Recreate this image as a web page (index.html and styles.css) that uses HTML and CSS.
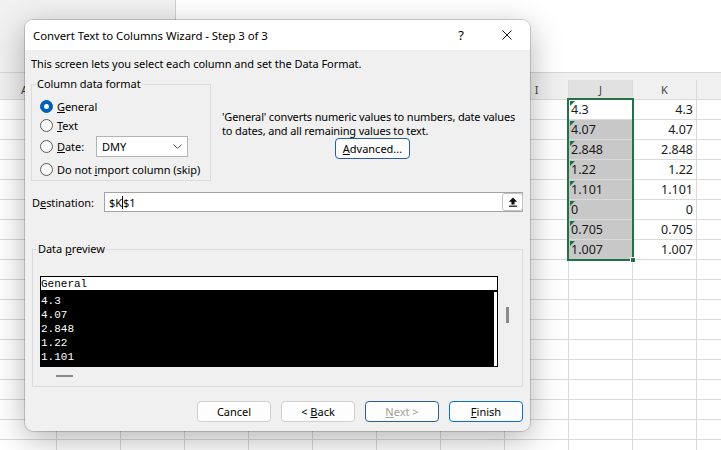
FILE: index.html
```html
<!doctype html>
<html lang="en">
  <head>
    <meta charset="UTF-8" />
    <meta name="viewport" content="width=device-width, initial-scale=1.0" />
    <title>Convert Text to Columns</title>
    <link rel="stylesheet" href="styles.css">
  </head>
  <body>
    <div class="sheet">
      <div class="topbar">
        <div class="namebox"></div>
        <div class="formula"></div>
      </div>
      <div class="grid-area">
        <!-- B to H sit under the dialog, so they are left blank -->
        <div class="colheads">
          <div class="ch">A</div>
          <div class="ch"></div>
          <div class="ch"></div>
          <div class="ch"></div>
          <div class="ch"></div>
          <div class="ch"></div>
          <div class="ch"></div>
          <div class="ch"></div>
          <div class="ch">I</div>
          <div class="ch cur">J</div>
          <div class="ch">K</div>
          <div class="ch"></div>
        </div>
        <div class="cells">
          <div class="c j">4.3</div><div class="c k">4.3</div>
          <div class="c j hl">4.07</div><div class="c k">4.07</div>
          <div class="c j hl">2.848</div><div class="c k">2.848</div>
          <div class="c j hl">1.22</div><div class="c k">1.22</div>
          <div class="c j hl">1.101</div><div class="c k">1.101</div>
          <div class="c j hl">0</div><div class="c k">0</div>
          <div class="c j hl">0.705</div><div class="c k">0.705</div>
          <div class="c j hl">1.007</div><div class="c k">1.007</div>
          <div class="selection"><span class="handle"></span></div>
        </div>
      </div>
    </div>

    <div class="dialog">
      <div class="titlebar">
        <span class="title">Convert Text to Columns Wizard - Step 3 of 3</span>
        <span class="tb-btn help">?</span>
        <span class="tb-btn close">
          <svg width="10" height="10" viewBox="0 0 10 10"><path d="M0.5 0.5 L9.5 9.5 M9.5 0.5 L0.5 9.5" stroke="#1a1a1a" stroke-width="1" fill="none"/></svg>
        </span>
      </div>

      <div class="dlg-body">
        <p class="intro">This screen lets you select each column and set the Data Format.</p>

        <div class="format-row">
          <div class="group format-group">
            <span class="group-title">Column data format</span>
            <label class="radio-row r1"><span class="radio on"></span><span><u>G</u>eneral</span></label>
            <label class="radio-row r2"><span class="radio"></span><span><u>T</u>ext</span></label>
            <label class="radio-row r3"><span class="radio"></span><span class="date-label"><u>D</u>ate:</span>
              <span class="combo">DMY
                <svg width="9" height="5" viewBox="0 0 9 5"><path d="M0.5 0.5 L4.5 4.5 L8.5 0.5" stroke="#555" fill="none"/></svg>
              </span>
            </label>
            <label class="radio-row r4"><span class="radio"></span><span>Do not <u>i</u>mport column (skip)</span></label>
          </div>
          <div class="format-info">
            <p>'General' converts numeric values to numbers, date values<br>to dates, and all remaining values to text.</p>
            <button class="btn advanced"><u>A</u>dvanced...</button>
          </div>
        </div>

        <div class="dest-row">
          <span class="dest-label">D<u>e</u>stination:</span>
          <div class="dest-input">
            <span class="dest-text">$K<span class="caret"></span>$1</span>
            <span class="ref-btn">
              <svg width="10" height="10" viewBox="0 0 10 10"><path d="M5 0.5 L9.2 4.8 H6.6 V7.6 H3.4 V4.8 H0.8 Z" fill="#111"/><rect x="1" y="8.6" width="8" height="1.2" fill="#111"/></svg>
            </span>
          </div>
        </div>

        <div class="group preview-group">
          <span class="group-title">Data <u>p</u>review</span>
          <div class="preview-wrap">
            <div class="preview">
              <div class="preview-head">General</div>
              <div class="preview-body">4.3<br>4.07<br>2.848<br>1.22<br>1.101</div>
            </div>
            <div class="vscroll"><span class="thumb"></span></div>
          </div>
          <div class="hscroll"><span class="thumb"></span></div>
        </div>

        <div class="buttons">
          <button class="btn">Cancel</button>
          <button class="btn">&lt; <u>B</u>ack</button>
          <button class="btn next"><u>N</u>ext &gt;</button>
          <button class="btn primary"><u>F</u>inish</button>
        </div>
      </div>
    </div>
  </body>
</html>
```

FILE: styles.css
```css
* {
  box-sizing: border-box;
  margin: 0;
  padding: 0;
}
body {
  position: relative;
  width: 721px;
  height: 450px;
  overflow: hidden;
  background: #fff;
  font-family: "Noto Sans", sans-serif;
}

/* spreadsheet behind the dialog */
.topbar {
  display: flex;
  height: 73px;
  border-bottom: 1px solid #d5d5d5;
}
.namebox {
  width: 176px;
  background: #f1f1f1;
  border-right: 1px solid #cfcfcf;
}
.formula {
  flex: 1;
}
.grid-area {
  width: 768px;
  margin-left: -8px;
}
.colheads {
  display: grid;
  grid-template-columns: repeat(12, 64px);
  height: 26px;
  padding-top: 7px;
  background: #f0f0f0;
}
.ch {
  border-left: 1px solid #dadada;
  font-size: 11px;
  line-height: 19px;
  text-align: center;
  color: #444;
}
.ch.cur {
  background: #e1e1e1;
}
.cells {
  position: relative;
  display: grid;
  grid-template-columns: repeat(12, 64px);
  grid-auto-rows: 20px;
  height: 360px;
  background-image: linear-gradient(to right, #dadada 1px, transparent 1px),
    linear-gradient(to bottom, #dadada 1px, transparent 1px);
  background-size: 64px 20px;
}
.c {
  position: relative;
  border-left: 1px solid transparent;
  border-top: 1px solid transparent;
  background-clip: padding-box;
  padding: 0 2px;
  font-size: 12.5px;
  line-height: 19px;
  color: #1a1a1a;
}
.c.j {
  grid-column: 10;
}
.c.k {
  grid-column: 11;
  text-align: right;
  padding-right: 3px;
}
.c.j::before {
  content: "";
  position: absolute;
  left: 1px;
  top: 1px;
  border-top: 5px solid #1e7145;
  border-right: 5px solid transparent;
}
.c.hl {
  background-color: #c8c8c8;
}
.selection {
  position: absolute;
  left: 575px;
  top: -1px;
  width: 67px;
  height: 163px;
  border: 2px solid #217346;
}
.handle {
  position: absolute;
  right: -4px;
  bottom: -4px;
  width: 6px;
  height: 6px;
  background: #217346;
  border: 1px solid #fff;
}

/* dialog */
.dialog {
  position: absolute;
  left: 25px;
  top: 20px;
  width: 505px;
  height: 411px;
  background: #f0f0f0;
  border-radius: 8px;
  box-shadow: 0 0 0 1px rgba(0, 0, 0, 0.16), 0 8px 32px rgba(0, 0, 0, 0.3);
  overflow: hidden;
  font-size: 11px;
  letter-spacing: -0.05px;
  color: #000;
}
.titlebar {
  display: flex;
  align-items: center;
  height: 30px;
  background: #fff;
}
.title {
  flex: 1;
  padding-left: 8px;
  font-size: 11.4px;
}
.tb-btn {
  display: flex;
  align-items: center;
  justify-content: center;
  width: 46px;
  height: 30px;
}
.help {
  font-size: 13px;
}
.dlg-body {
  padding: 0 7px 0 6px;
}
.intro {
  margin-top: 7px;
  line-height: 14px;
}
.format-row {
  display: flex;
  margin-top: 13px;
}
.group {
  border: 1px solid #dcdcdc;
}
.group-title {
  display: block;
  width: fit-content;
  margin: -8px 0 0 4px;
  padding: 0 1px;
  line-height: 14px;
  background: #f0f0f0;
}
.format-group {
  flex: none;
  width: 180px;
  height: 97px;
}
.radio-row {
  display: flex;
  align-items: center;
  white-space: nowrap;
}
.r1 {
  margin-top: 6px;
  height: 19px;
}
.r2 {
  height: 19px;
}
.r3 {
  height: 23px;
}
.r4 {
  height: 22px;
}
.radio {
  display: flex;
  align-items: center;
  justify-content: center;
  flex: none;
  width: 13px;
  height: 13px;
  margin: 0 4px 0 8px;
  border: 1px solid #5c5c5c;
  border-radius: 50%;
  background: #f9f9f9;
}
.radio.on {
  background: #005fb8;
  border-color: #005fb8;
}
.radio.on::after {
  content: "";
  width: 5px;
  height: 5px;
  border-radius: 50%;
  background: #fff;
}
.date-label {
  width: 39px;
}
.combo {
  display: flex;
  align-items: center;
  justify-content: space-between;
  width: 92px;
  height: 21px;
  padding: 0 5px;
  background: #fff;
  border: 1px solid #b4b4b4;
}
.format-info {
  flex: 1;
  margin-left: 11px;
  padding-top: 26px;
  text-align: center;
}
.format-info p {
  text-align: left;
  line-height: 13.5px;
  white-space: nowrap;
  letter-spacing: -0.15px;
}
.btn {
  height: 21px;
  width: 74px;
  font-family: inherit;
  font-size: 11px;
  color: #000;
  background: #fdfdfd;
  border: 1px solid #d0d0d0;
  border-radius: 4px;
}
.advanced {
  width: 75px;
  margin-top: 1px;
  border-color: #2c5d9b;
}
.dest-row {
  display: flex;
  align-items: center;
  margin-top: 11px;
  height: 20px;
}
.dest-label {
  width: 72px;
  margin-left: 1px;
}
.dest-input {
  display: flex;
  align-items: center;
  flex: 1;
  height: 20px;
  padding-left: 4px;
  background: #fff;
  border: 1px solid #a3a3a3;
}
.dest-text {
  flex: 1;
  display: flex;
  align-items: center;
}
.caret {
  width: 1px;
  height: 13px;
  background: #000;
}
.ref-btn {
  display: flex;
  align-items: center;
  justify-content: center;
  width: 21px;
  height: 18px;
  margin-right: -1px;
  border: 1px solid #c4c4c4;
  border-radius: 3px;
  background: #fff;
}
.preview-group {
  margin: 37px 0 0 1px;
  height: 138px;
}
.preview-wrap {
  display: flex;
  margin: 20px 0 0 7px;
}
.preview {
  width: 458px;
  height: 91px;
  border: 1px solid #000;
  background: #fff;
  font-family: "Liberation Mono", monospace;
  font-size: 11px;
  letter-spacing: 0;
}
.preview-head {
  height: 15px;
  line-height: 15px;
  border-bottom: 2px solid #000;
}
.preview-body {
  height: 74px;
  margin-right: 3px;
  padding-top: 2px;
  line-height: 14px;
  color: #fff;
  background: #000;
}
.vscroll .thumb {
  display: block;
  width: 3px;
  height: 16px;
  margin: 31px 0 0 8px;
  background: #8a8a8a;
}
.hscroll .thumb {
  display: block;
  width: 17px;
  height: 2px;
  margin: 8px 0 0 23px;
  background: #8a8a8a;
}
.buttons {
  display: flex;
  justify-content: flex-end;
  gap: 10px;
  margin-top: 14px;
}
.next {
  color: #a0a0a0;
  border-color: #2c5d9b;
}
.primary {
  border-color: #0a6fd1;
}
```
